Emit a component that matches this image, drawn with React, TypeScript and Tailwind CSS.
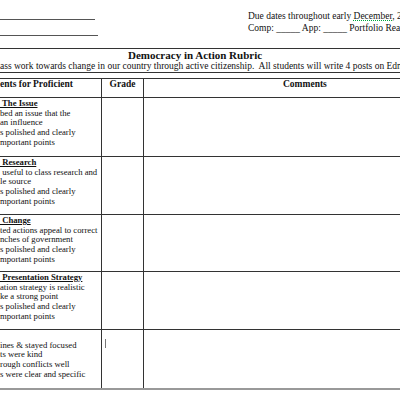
import React from 'react';

type Row = {
  heading: string;
  lines: string[];
};

// visible part of the rubric rows (the page is cropped on the left)
const rows: Row[] = [
  { heading: ' The Issue', lines: ['bed an issue that the', 'an influence', 's polished and clearly', 'mportant points'] },
  { heading: ' Research', lines: [' useful to class research and', 'le source', 's polished and clearly', 'mportant points'] },
  { heading: ' Change', lines: ['ted actions appeal to correct', 'nches of government', 's polished and clearly', 'mportant points'] },
  { heading: ' Presentation Strategy', lines: ['ation strategy is realistic', 'ke a strong point', 's polished and clearly', 'mportant points'] },
  { heading: '', lines: ['ines & stayed focused', 'ts were kind', 'rough conflicts well', 's were clear and specific'] },
];

const rowHeights = ['h-[59px]', 'h-[58px]', 'h-[57px]', 'h-[58px]', 'h-[58px]'];

const App = () => {
  return (
    <div className="w-[400px] h-[400px] overflow-hidden bg-white text-[#111] font-['Liberation_Serif',serif]">
      {/* header with name lines and due dates */}
      <div className="flex h-[48px]">
        <div className="w-[248px] shrink-0">
          <div className="mt-[19px] w-[95px] border-t border-[#555]" />
          <div className="mt-[15px] w-[98px] border-t border-[#555]" />
        </div>
        <div className="pt-[10px] text-[9.5px] leading-[12px] whitespace-nowrap">
          <div>
            Due dates throughout early{' '}
            <span className="underline decoration-dotted decoration-green-600">December,</span> 2
          </div>
          <div>Comp: _____ App: _____ Portfolio Rea</div>
        </div>
      </div>

      {/* title box */}
      <div className="h-[25px] border-y border-[#333]">
        <div className="pl-[128px] text-[11px] leading-[12px] font-bold whitespace-nowrap">Democracy in Action Rubric</div>
        <div className="text-[9.5px] leading-[10px] whitespace-nowrap">
          ass work towards change in our country through active citizenship.&nbsp; All students will write 4 posts on Edm
        </div>
      </div>

      {/* rubric table */}
      <div className="mt-[5px] grid grid-cols-[102px_42px_1fr] border-t border-[#333] border-b-2 border-b-[#999]">
        <div className="h-[19px] border-r border-b border-[#333] text-[9.5px] leading-[11px] font-bold whitespace-nowrap">
          ents for Proficient
        </div>
        <div className="h-[19px] border-r border-b border-[#333] text-[9.5px] leading-[11px] font-bold text-center">Grade</div>
        <div className="h-[19px] border-b border-[#333] text-[9.5px] leading-[11px] font-bold pl-[139px]">Comments</div>

        {rows.map((row, i) => (
          <React.Fragment key={i}>
            <div
              className={`${rowHeights[i]} pt-[1px] border-r border-[#333] text-[8.7px] leading-[9.7px] whitespace-nowrap ${
                i < rows.length - 1 ? 'border-b' : ''
              }`}
            >
              <div className="h-[9.7px] font-bold underline whitespace-pre">{row.heading}</div>
              {row.lines.map((line) => (
                <div key={line} className="whitespace-pre">
                  {line}
                </div>
              ))}
            </div>
            <div className={`${rowHeights[i]} border-r border-[#333] ${i < rows.length - 1 ? 'border-b' : ''}`}>
              {i === rows.length - 1 && <div className="ml-[3px] mt-[9px] w-[1px] h-[9px] bg-[#777]" />}
            </div>
            <div className={`${rowHeights[i]} border-[#333] ${i < rows.length - 1 ? 'border-b' : ''}`} />
          </React.Fragment>
        ))}
      </div>
    </div>
  );
};

export default App;
